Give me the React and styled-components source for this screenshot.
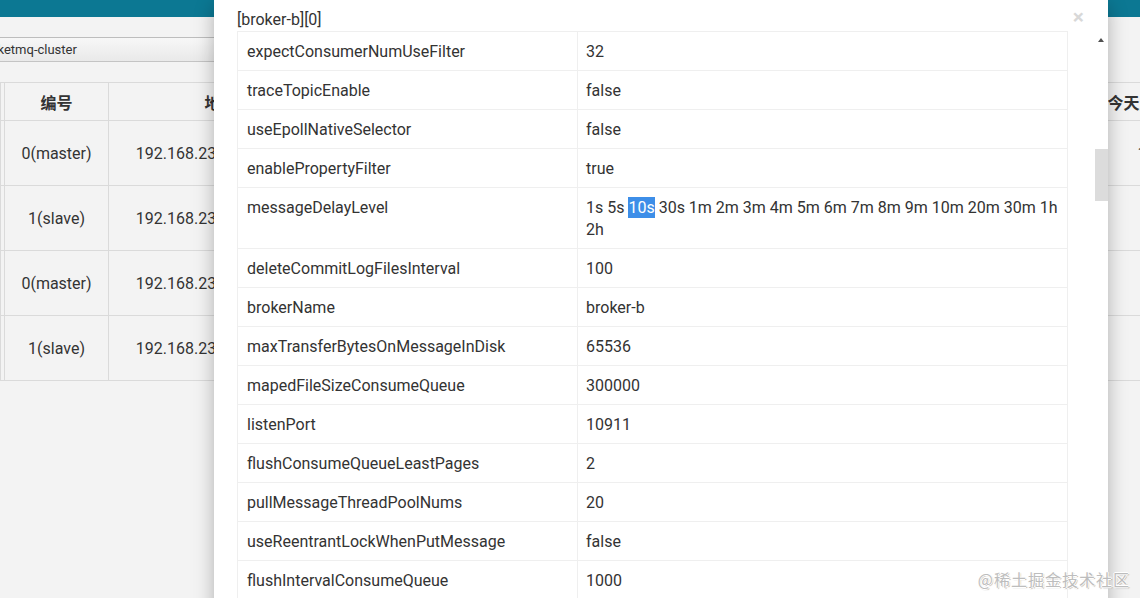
import React from "react";
import styled, { createGlobalStyle } from "styled-components";

const COLORS = {
  bar: "#0c7893",
  page: "#f3f3f3",
  line: "#dadada",
  text: "#333333",
  cellLine: "#efefef",
};

const GlobalStyle = createGlobalStyle`
  html, body {
    margin: 0;
    padding: 0;
    overflow: hidden;
  }
  body {
    font-family: Roboto, "Noto Sans CJK SC", sans-serif;
    color: ${COLORS.text};
  }
`;

const Page = styled.div`
  position: relative;
  width: 1140px;
  height: 598px;
  overflow: hidden;
  background: ${COLORS.page};
`;

const TopBar = styled.div`
  height: 17px;
  background: ${COLORS.bar};
`;

// the cluster picker is cut by the left edge of the window
const ClusterSelect = styled.div`
  margin: 20px 0 0 -21px;
  width: 235px;
  height: 23px;
  border-top: 1px solid #bdbdbd;
  border-bottom: 1px solid #c4c4c4;
  background: linear-gradient(#f7f7f7, #e9e9e9);
  font-size: 13px;
  line-height: 23px;
  color: #333;
  white-space: nowrap;
`;

const BgTable = styled.table`
  margin-top: 20px;
  border-collapse: collapse;
  table-layout: fixed;
  width: 1210px;

  th,
  td {
    border: 1px solid ${COLORS.line};
    text-align: center;
    white-space: nowrap;
    overflow: hidden;
    font-size: 16px;
    color: #333;
    padding: 0;
  }
  th {
    height: 37px;
    font-weight: bold;
    font-family: "Noto Sans CJK SC", Roboto, sans-serif;
  }
  td {
    height: 64px;
  }
`;

const Overlay = styled.div`
  position: absolute;
  inset: 0;
  display: flex;
  padding-left: 214px;
`;

const Modal = styled.div`
  width: 894px;
  height: 640px;
  background: #fff;
  box-shadow: 0 5px 18px rgba(0, 0, 0, 0.28);
  display: flex;
`;

const ModalBody = styled.div`
  flex: 1;
  padding-left: 23px;
  display: flex;
  flex-direction: column;
`;

const Header = styled.div`
  display: flex;
  align-items: center;
  justify-content: space-between;
  height: 31px;
  padding-top: 8px;
  box-sizing: border-box;
  width: 831px;
`;

const Title = styled.span`
  font-size: 16px;
  color: #333;
`;

const Close = styled.span`
  font-size: 21px;
  font-weight: bold;
  color: #000;
  opacity: 0.15;
  line-height: 1;
  margin-right: -16px;
  margin-top: -5px;
`;

const ConfigTable = styled.table`
  width: 831px;
  border-collapse: collapse;
  table-layout: fixed;

  td {
    border: 1px solid ${COLORS.cellLine};
    padding: 8px 9px;
    line-height: 22px;
    font-size: 16px;
    color: #333;
    vertical-align: top;
  }
  td:first-child {
    width: 321px;
    padding-top: 9px;
    padding-bottom: 7px;
  }
  td:last-child {
    padding: 9px 3px 7px 8px;
  }
`;

const Selected = styled.span`
  background: #3d8ee8;
  color: #fff;
  padding: 1px 0;
`;

const Scrollbar = styled.div`
  width: 14px;
  display: flex;
  flex-direction: column;
  align-items: center;
`;

const ArrowUp = styled.div`
  margin-top: 38px;
  width: 0;
  height: 0;
  border-left: 3px solid transparent;
  border-right: 3px solid transparent;
  border-bottom: 4px solid #505050;
`;

const Thumb = styled.div`
  margin-top: 107px;
  width: 13px;
  height: 52px;
  background: #dcdcdc;
`;

const Watermark = styled.div`
  position: absolute;
  right: 10px;
  bottom: 7px;
  font-family: "Noto Sans CJK SC", sans-serif;
  font-size: 16px;
  color: #bdbdbd;
  text-shadow: 1px 0 0 #fff, -1px 0 0 #fff, 0 1px 0 #fff, 0 -1px 0 #fff,
    1px 1px 1px #9a9a9a;
  letter-spacing: 1px;
`;

const brokers = [
  ["0(master)", "192.168.232.129:10911", "1576"],
  ["1(slave)", "192.168.232.130:10911", "0"],
  ["0(master)", "192.168.232.131:10911", "1"],
  ["1(slave)", "192.168.232.132:10911", "0"],
];

const config = [
  ["expectConsumerNumUseFilter", "32"],
  ["traceTopicEnable", "false"],
  ["useEpollNativeSelector", "false"],
  ["enablePropertyFilter", "true"],
  ["messageDelayLevel", "delay"],
  ["deleteCommitLogFilesInterval", "100"],
  ["brokerName", "broker-b"],
  ["maxTransferBytesOnMessageInDisk", "65536"],
  ["mapedFileSizeConsumeQueue", "300000"],
  ["listenPort", "10911"],
  ["flushConsumeQueueLeastPages", "2"],
  ["pullMessageThreadPoolNums", "20"],
  ["useReentrantLockWhenPutMessage", "false"],
  ["flushIntervalConsumeQueue", "1000"],
];

const DelayValue = () => (
  <>
    1s 5s <Selected>10s</Selected> 30s 1m 2m 3m 4m 5m 6m 7m 8m 9m 10m 20m 30m
    1h 2h
  </>
);

const App = () => {
  return (
    <Page>
      <GlobalStyle />
      <TopBar />
      <ClusterSelect>rocketmq-cluster</ClusterSelect>
      <BgTable>
        <colgroup>
          <col style={{ width: 4 }} />
          <col style={{ width: 104 }} />
          <col style={{ width: 224 }} />
          <col style={{ width: 192 }} />
          <col style={{ width: 192 }} />
          <col style={{ width: 192 }} />
          <col style={{ width: 192 }} />
          <col style={{ width: 110 }} />
        </colgroup>
        <thead>
          <tr>
            <th></th>
            <th>编号</th>
            <th>地址</th>
            <th>版本</th>
            <th>生产消息TPS</th>
            <th>消费消息TPS</th>
            <th>昨日生产总数</th>
            <th>今天生产总数</th>
          </tr>
        </thead>
        <tbody>
          {brokers.map((b, i) => (
            <tr key={i}>
              <td></td>
              <td>{b[0]}</td>
              <td>{b[1]}</td>
              <td>V4_9_4</td>
              <td>0.00</td>
              <td>0.00</td>
              <td>0</td>
              <td>{b[2]}</td>
            </tr>
          ))}
        </tbody>
      </BgTable>

      <Overlay>
        <Modal>
          <ModalBody>
            <Header>
              <Title>[broker-b][0]</Title>
              <Close>×</Close>
            </Header>
            <ConfigTable>
              <tbody>
                {config.map(([k, v]) => (
                  <tr key={k}>
                    <td>{k}</td>
                    <td>{v === "delay" ? <DelayValue /> : v}</td>
                  </tr>
                ))}
              </tbody>
            </ConfigTable>
          </ModalBody>
          <Scrollbar>
            <ArrowUp />
            <Thumb />
          </Scrollbar>
        </Modal>
      </Overlay>
      <Watermark>@稀土掘金技术社区</Watermark>
    </Page>
  );
};

export default App;
